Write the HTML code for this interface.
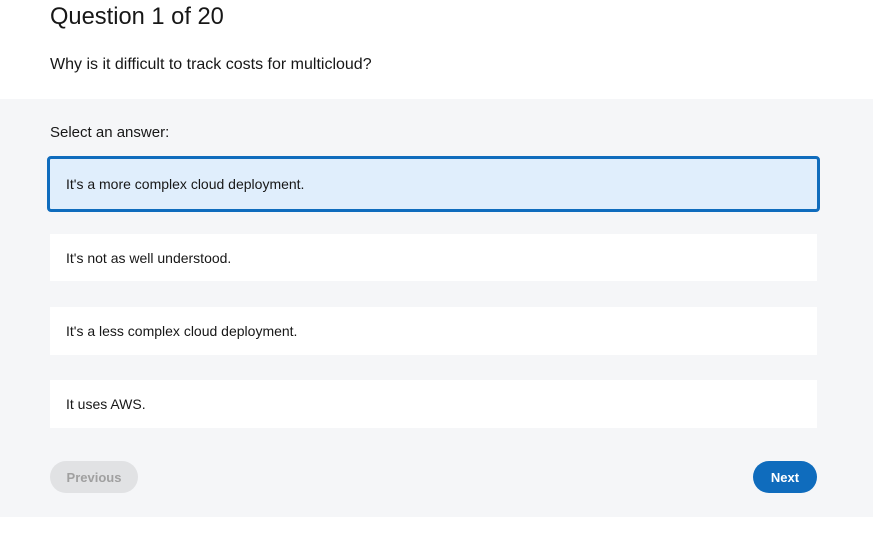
<!DOCTYPE html>
<html><head><style>
body{margin:0;width:873px;height:537px;background:#fff;font-family:"Liberation Sans",sans-serif;color:#171717;position:relative;overflow:hidden}
.a{position:absolute}
.opt{position:absolute;left:50px;width:767px;background:#fff;font-size:14px;box-sizing:border-box;padding-left:16px;display:flex;align-items:center}
.btn{position:absolute;top:461px;height:32px;border-radius:16px;font-size:13px;font-weight:bold;display:flex;align-items:center;justify-content:center}
</style></head><body>
<div class="a" style="left:50px;top:4px;font-size:23.7px">Question 1 of 20</div>
<div class="a" style="left:50px;top:56px;font-size:16px">Why is it difficult to track costs for multicloud?</div>
<div class="a" style="left:0;top:99px;width:873px;height:418px;background:#f5f6f8"></div>
<div class="a" style="left:50px;top:124px;font-size:15px">Select an answer:</div>
<div class="opt" style="left:47px;top:156px;width:773px;height:56px;background:#e0eefc;border:3px solid #0f6cbd;border-radius:4px;padding-left:16px">It's a more complex cloud deployment.</div>
<div class="opt" style="top:234px;height:47px">It's not as well understood.</div>
<div class="opt" style="top:307px;height:48px">It's a less complex cloud deployment.</div>
<div class="opt" style="top:380px;height:48px">It uses AWS.</div>
<div class="btn" style="left:50px;width:88px;background:#e1e2e4;color:#a0a0a0">Previous</div>
<div class="btn" style="left:753px;width:64px;background:#0f6cbd;color:#fff">Next</div>
</body></html>
